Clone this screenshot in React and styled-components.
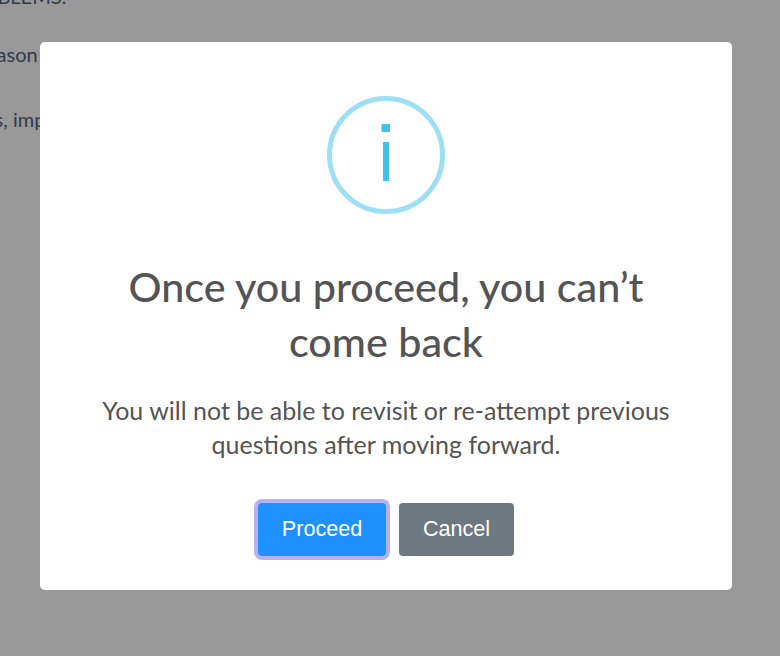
import React from "react";
import styled, { createGlobalStyle } from "styled-components";

const Global = createGlobalStyle`
  html, body { margin: 0; padding: 0; background: #fff; }
  body { font-family: "Lato", "Noto Sans", sans-serif; overflow: hidden; }
`;

const Page = styled.main`
  width: 780px;
  height: 656px;
  overflow: hidden;
  color: #566080;
  font-size: 20px;
  line-height: 28px;
`;

const PageText = styled.p`
  margin: 0 0 37px ${(p) => p.$shift}px;
  white-space: nowrap;
  &:first-child { margin-top: -18px; margin-bottom: 30px; }
`;

const Backdrop = styled.div`
  position: fixed;
  inset: 0;
  background: rgba(0, 0, 0, 0.4);
  display: flex;
  justify-content: center;
  align-items: flex-start;
  padding-top: 42px;
  box-sizing: border-box;
`;

const Dialog = styled.div`
  width: 692px;
  height: 548px;
  box-sizing: border-box;
  background: #fff;
  border-radius: 5px;
  padding-top: 54px;
  display: flex;
  flex-direction: column;
  align-items: center;
  margin-right: 8px;
`;

const InfoIcon = styled.svg`
  display: block;
  width: 118px;
  height: 118px;
`;

const Title = styled.h2`
  margin: 45px 0 0;
  width: 560px;
  text-align: center;
  color: #545454;
  font-family: "Lato", "Noto Sans", sans-serif;
  font-size: 41.3px;
  font-weight: 500;
  line-height: 55px;
`;

const Message = styled.p`
  margin: 24px 0 0;
  width: 620px;
  text-align: center;
  color: #545454;
  font-size: 25px;
  font-weight: 400;
  line-height: 34px;
`;

const Actions = styled.div`
  display: flex;
  gap: 13px;
  margin-top: 42px;
  align-items: center;
`;

const Button = styled.button`
  font-family: "Liberation Sans", Arial, sans-serif;
  font-size: 21.6px;
  color: #fff;
  border: 0;
  height: 53px;
  width: ${(p) => p.$w}px;
  padding: 0 0 2px;
  border-radius: 4px;
  background: ${(p) => p.$bg};
  box-shadow: ${(p) => (p.$focus ? "0 0 0 4px rgba(112, 102, 224, 0.5)" : "none")};
`;

export default function App() {
  return (
    <>
      <Global />
      <Page>
        <PageText $shift={-43}>PROBLEMS:</PageText>
        <PageText $shift={-103}>for some reason that matters</PageText>
        <PageText $shift={-88}>challenges, important details</PageText>
      </Page>
      <Backdrop>
        <Dialog role="dialog">
          <InfoIcon viewBox="0 0 118 118" aria-hidden="true">
            <circle cx="59" cy="59" r="56.5" fill="none" stroke="#9de0f6" strokeWidth="5" />
            <rect x="54.5" y="28" width="8.5" height="8" fill="#3fc3ee" />
            <rect x="56" y="46" width="6" height="39" fill="#3fc3ee" />
          </InfoIcon>
          <Title>Once you proceed, you can’t come back</Title>
          <Message>You will not be able to revisit or re-attempt previous questions after moving forward.</Message>
          <Actions>
            <Button $bg="#1e90ff" $w={128} $focus>Proceed</Button>
            <Button $bg="#6e7881" $w={115}>Cancel</Button>
          </Actions>
        </Dialog>
      </Backdrop>
    </>
  );
}
